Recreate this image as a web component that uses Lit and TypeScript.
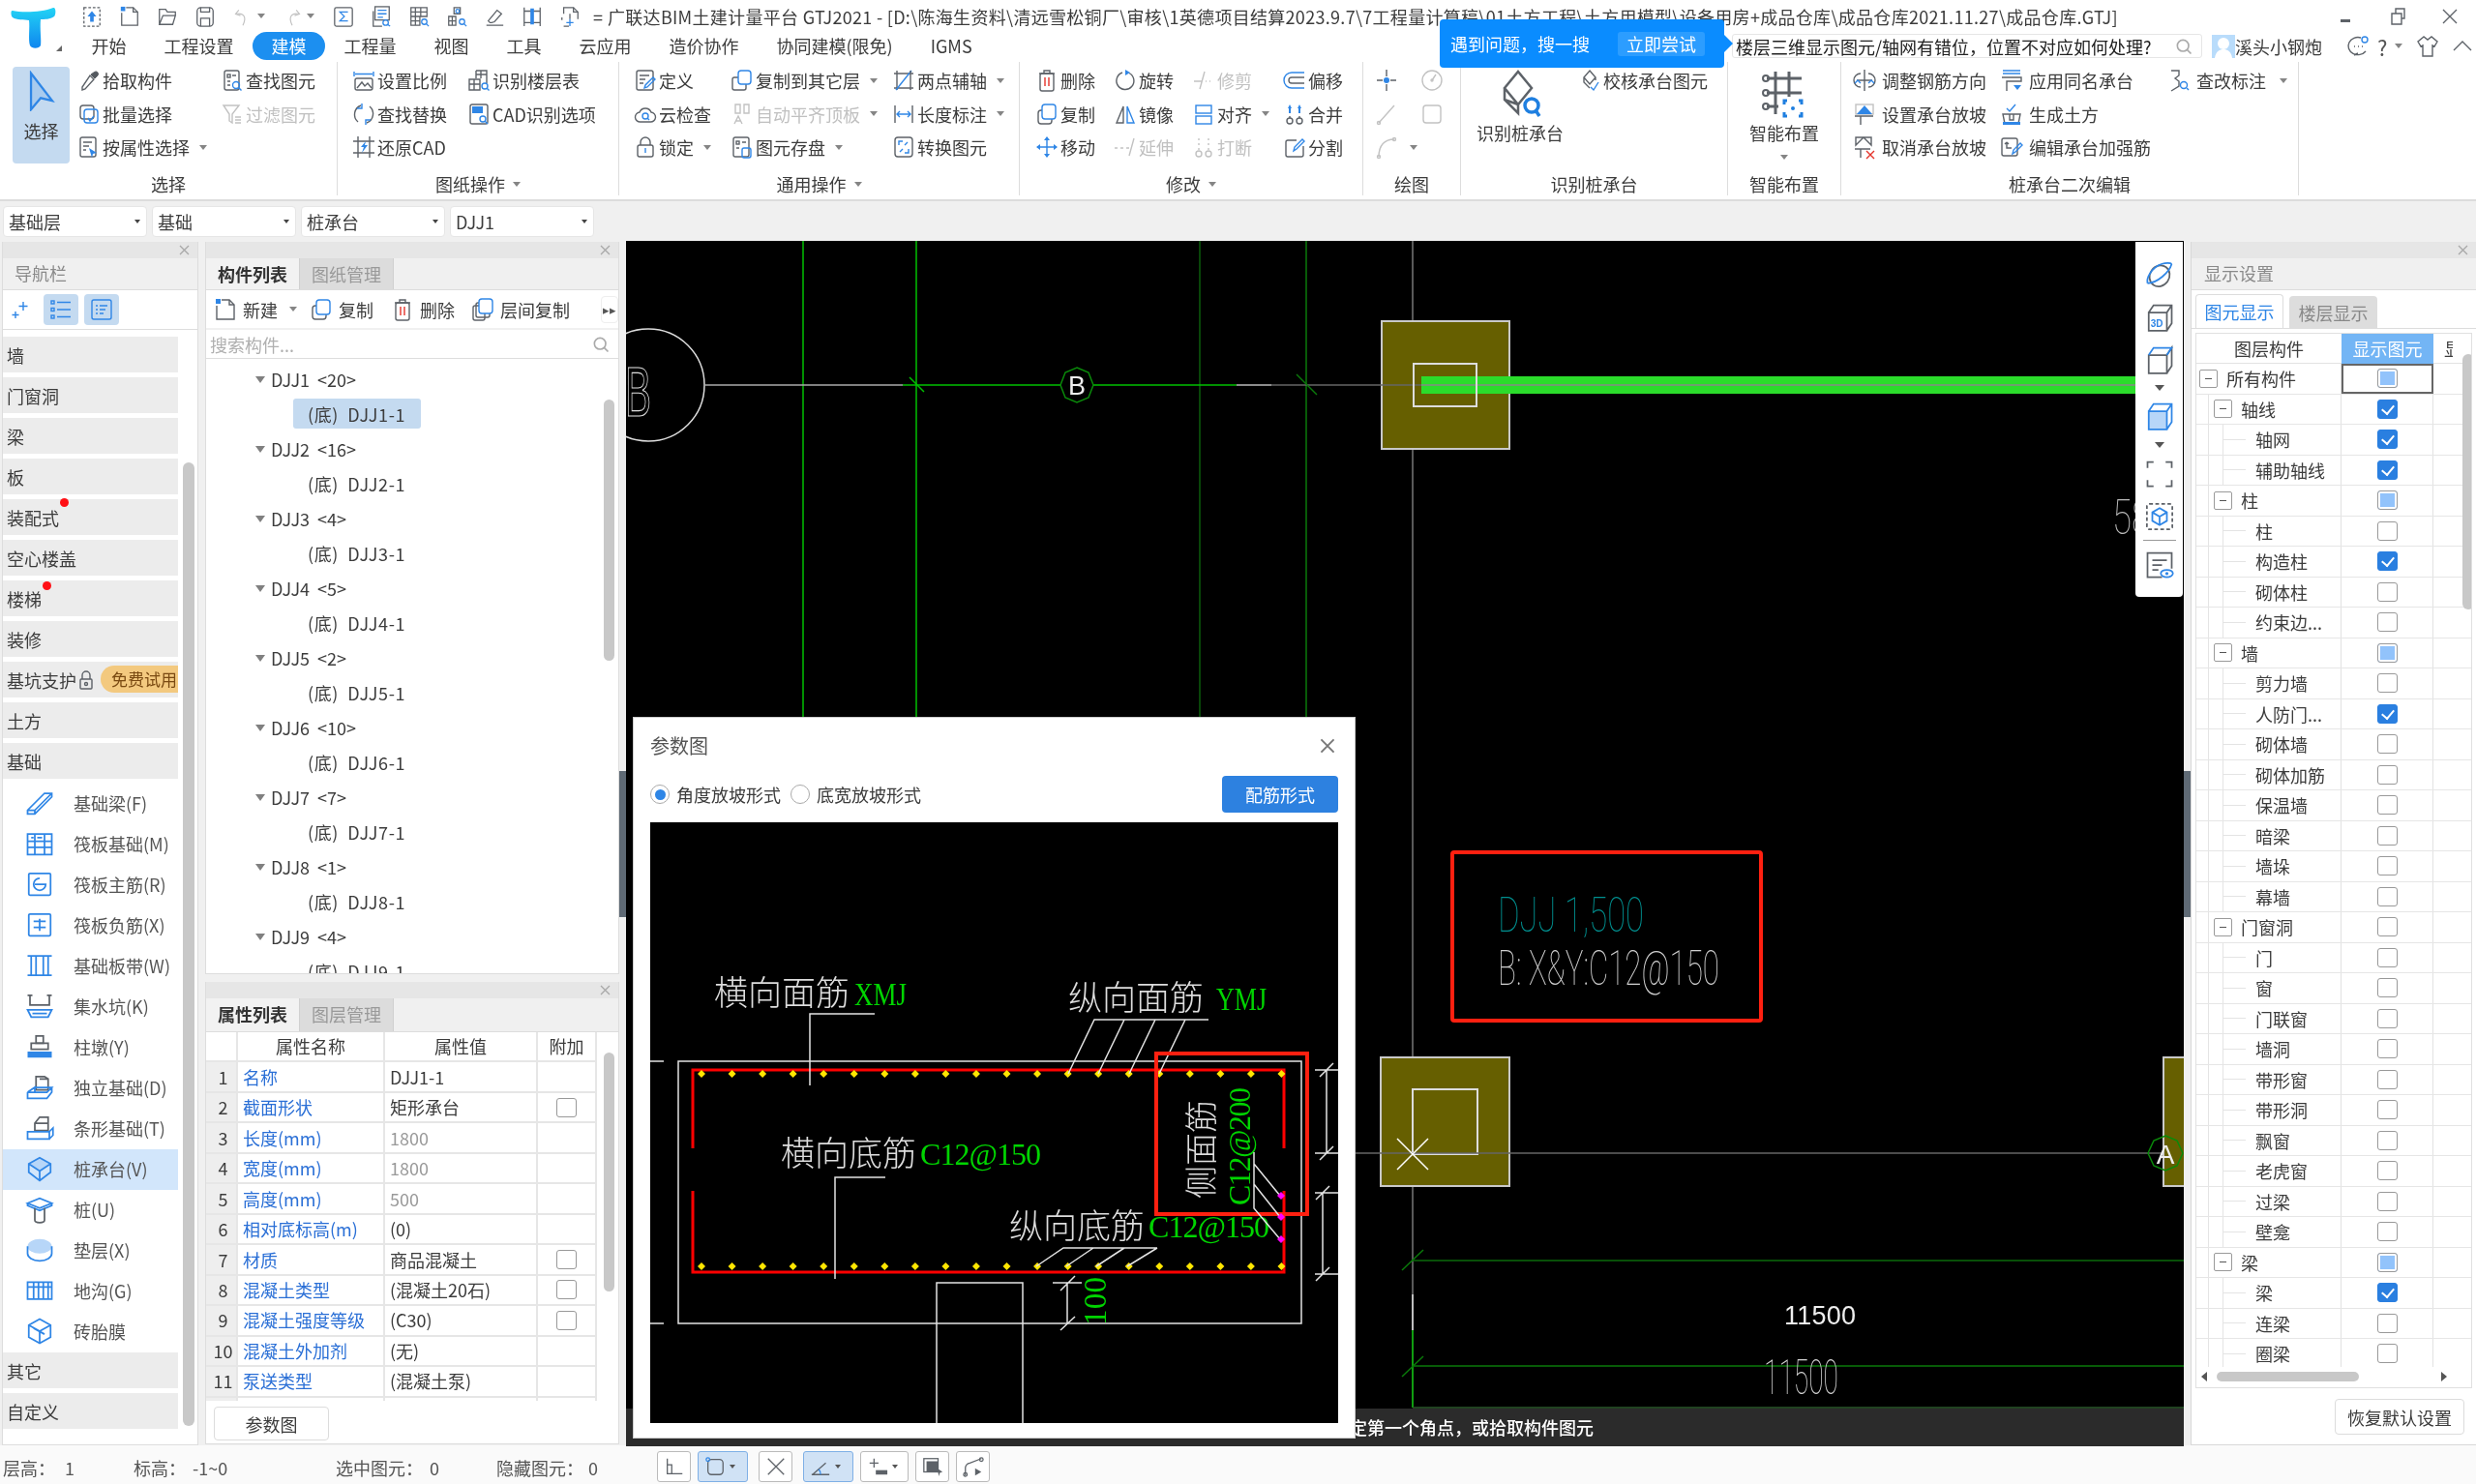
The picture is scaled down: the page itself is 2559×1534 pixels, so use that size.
import { LitElement, html, svg, css, nothing } from 'lit';
import { customElement } from 'lit/decorators.js';

// ribbon and panel icons, all on a 24 box unless the class says otherwise
const I: Record<string, any> = {
  pick: svg`<path class="dk" d="M14 6l4 4 3-3a2.5 2.5 0 0 0-3.5-3.5z"/><path class="s" d="M13 7l4 4-9 10-3 1 0-3z"/>`,
  find: svg`<rect class="s" x="4" y="2" width="15" height="20" rx="2"/><rect class="s" x="7" y="6" width="3" height="3"/><path class="s" d="M12 7h4M7 13h3M7 17h3"/><circle class="b" cx="16" cy="17" r="3.5"/><path class="b" d="M18.5 19.5l3 3"/>`,
  batch: svg`<rect class="s" x="3" y="3" width="14" height="14" rx="3"/><rect class="b" x="7" y="7" width="14" height="14" rx="3"/><path class="b" d="M11 16l2 3 4-5"/>`,
  filter: svg`<path class="d" d="M3 3h16l-7 9v9l-3-2v-7zM15 15h6M15 18h6M15 21h6"/>`,
  attr: svg`<rect class="s" x="3" y="2" width="16" height="20" rx="2"/><path class="s" d="M6 7h9M6 11h6M6 15h3"/><path class="bf" d="M12 13l8 5-4 1-1 4z"/>`,
  scale: svg`<path class="b" d="M2 3v5M22 3v5M3 5.500h18"/><rect class="s" x="3" y="10" width="18" height="12" rx="2"/><path class="s" d="M5 20l5-6 3 4 3-3 4 5"/>`,
  floor: svg`<path class="s" d="M9 2h11v13M9 2v8M14 2v8M9 6h11M2 11h11v11H2zM7 11v11M2 16h11"/><circle class="b" cx="18" cy="18" r="3"/><path class="b" d="M20 20l2.500 2.500"/>`,
  swap: svg`<path class="s" d="M9 3a10 10 0 0 0-3 17M15 21a10 10 0 0 0 3-17"/><path class="b" d="M10 1v5H5M14 23v-5h5"/>`,
  cad: svg`<rect class="s" x="3" y="2" width="18" height="20" rx="2"/><rect class="bf" x="5" y="4" width="11" height="7"/><circle class="b" cx="16" cy="17" r="3"/><path class="b" d="M18 19l3 3"/>`,
  restore: svg`<path class="s" d="M6 1v22M18 1v22M1 6h22M1 18h22"/><path class="bf" d="M14 6l-5 6h3l-2 6 6-8h-3z"/>`,
  define: svg`<rect class="s" x="3" y="2" width="17" height="20" rx="2"/><path class="s" d="M6 7h10M6 11h6M6 15h4"/><path class="b" d="M11 20l1-3 8-8 2 2-8 8z"/>`,
  cloud: svg`<path class="s" d="M7 20a5 5 0 0 1-1-10 6.500 6.500 0 0 1 12 0 5 5 0 0 1-1 10z"/><circle class="b" cx="12" cy="14" r="3"/><path class="b" d="M14 16l2 2"/>`,
  lock: svg`<path class="s" d="M7 10V7a5 5 0 0 1 10 0v3"/><rect class="s" x="4" y="10" width="16" height="12" rx="2"/><path class="b" d="M12 13v5"/>`,
  layer: svg`<rect class="s" x="2" y="9" width="14" height="13" rx="2"/><rect class="lb" x="8" y="2" width="13" height="14" rx="3"/>`,
  level: svg`<path class="d" d="M5 2h5v9H5zM14 2h5v9h-5zM4 22l4-8 4 8M6 19h4"/>`,
  store: svg`<rect class="s" x="3" y="2" width="16" height="20" rx="2"/><rect class="s" x="6" y="6" width="3" height="3"/><path class="s" d="M12 7h4M6 13h3"/><rect class="b" x="12" y="13" width="9" height="10" rx="2"/>`,
  axis: svg`<path class="s" d="M5 2v20M2 20h20M2 5h20"/><path class="b" d="M4 22L20 2"/><path class="s" d="M19 2v20"/>`,
  length: svg`<path class="s" d="M3 3v18M21 3v18"/><path class="b" d="M5 12h14M8 9l-3 3 3 3M16 9l3 3-3 3"/>`,
  convert: svg`<rect class="s" x="3" y="2" width="18" height="20" rx="3"/><path class="b" d="M7 10V6h4M17 14v4h-4M8 17l3-3M16 7l-3 3"/>`,
  del: svg`<path class="s" d="M4 5h16M9 5V2h6v3"/><rect class="s" x="5" y="5" width="14" height="18" rx="2"/><path class="r" d="M10 9v9M14 9v9"/>`,
  rotate: svg`<path class="s" d="M9 4a9 9 0 1 0 7 .5"/><path class="bf" d="M12 1l5 3-5 3z"/>`,
  trim: svg`<path class="d" d="M2 13h8M14 13h1M18 13h1M13 3l-5 18"/>`,
  offset: svg`<path class="b" d="M22 4H9a8 8 0 0 0 0 16h13"/><path class="s" d="M22 9H9a3 3 0 0 0 0 6h13"/>`,
  copy: svg`<rect class="s" x="3" y="8" width="14" height="14" rx="3"/><rect class="lb" x="7" y="2" width="14" height="15" rx="3"/>`,
  mirror: svg`<path class="s" d="M10 4L3 21h7z"/><path class="lb" d="M14 4l7 17h-7z"/>`,
  alignO: svg`<rect class="b" x="4" y="3" width="16" height="8"/><rect class="lb" x="4" y="14" width="16" height="8"/>`,
  merge: svg`<circle class="s" cx="7" cy="19" r="3"/><circle class="s" cx="17" cy="19" r="3"/><path class="s" d="M7 14v2M17 14v2"/><path class="bf" d="M7 2l2 4H8v5H6V6H5zM17 2l2 4h-1v5h-2V6h-1z"/>`,
  move: svg`<path class="b" d="M12 2v20M2 12h20"/><path class="bf" d="M12 1l3 4H9zM12 23l3-4H9zM1 12l4-3v6zM23 12l-4-3v6z"/>`,
  extend: svg`<path class="d" d="M1 13h3M7 13h3M13 13h3M21 3l-5 18"/>`,
  brk: svg`<circle class="d" cx="7" cy="19" r="3"/><circle class="d" cx="17" cy="19" r="3"/><path class="d" d="M7 3v2M7 8v2M7 13v2M17 3v2M17 8v2M17 13v2"/>`,
  split: svg`<path class="s" d="M14 5H5a2 2 0 0 0-2 2v13a2 2 0 0 0 2 2h14a2 2 0 0 0 2-2v-9"/><path class="b" d="M11 16l1-4 8-8 2 2-8 8z"/>`,
  point: svg`<path class="s" d="M12 1v7M12 16v7M2 12h6M16 12h6"/><circle class="bf" cx="12" cy="12" r="3"/>`,
  clock: svg`<circle class="d" cx="12" cy="12" r="10"/><path class="d" d="M12 12l4-6"/><circle class="d" cx="12" cy="12" r="1"/>`,
  line: svg`<path class="d" d="M4 21L20 3"/><circle class="d" cx="4" cy="21" r="1.500"/>`,
  rect: svg`<rect class="d" x="3" y="3" width="18" height="18" rx="3"/>`,
  arc: svg`<path class="d" d="M4 22C4 10 10 4 20 4"/><circle class="d" cx="4" cy="22" r="1.500"/><circle class="d" cx="20" cy="4" r="1.500"/>`,
  checkCap: svg`<path class="s" d="M12 2l6 7-6 7-6-7zM6 9v5l6 6M18 9v3"/><path class="b" d="M13 19l3 3 5-8"/>`,
  adjust: svg`<path class="s" d="M12 1v22M4 12h16M8 5a6 6 0 0 0 0 14M16 5a6 6 0 0 1 0 14"/><path class="b" d="M2 15l3-3 3 3M22 15l-3-3-3 3"/>`,
  slope: svg`<rect class="d" x="3" y="2" width="18" height="10"/><path class="bf" d="M12 3l8 9H4z"/><path class="s" d="M2 14h19M8 14v9"/>`,
  unslope: svg`<path class="s" d="M3 2h16v8l-8-8-8 8zM2 14h16M8 14v9"/><path class="r" d="M14 16l8 8M22 16l-8 8"/>`,
  apply: svg`<path class="b" d="M3 2h18M3 5h18"/><path class="s" d="M2 9h20v4H7v10"/><path class="bf" d="M14 17h8l-4 5z"/>`,
  earth: svg`<path class="b" d="M7 6l3 3 6-7"/><path class="s" d="M3 12h18l-2 10H5z"/><path class="s" d="M10 12v6h4v-6"/><path class="bf" d="M3 20h18v3H3z"/>`,
  editS: svg`<rect class="s" x="2" y="3" width="16" height="18" rx="2"/><path class="s" d="M7 7v6h5M7 7l-2 2M7 7l2 2"/><path class="b" d="M13 19l1-4 7-7 2 2-7 7z"/>`,
  modify: svg`<path class="s" d="M4 2h8v5l-4 3 4 3v5l-8 5"/><circle class="b" cx="17" cy="17" r="3.500"/><path class="b" d="M20 20l2 2"/>`,
  // quick access bar
  up: svg`<rect class="dash" x="3" y="2" width="18" height="21"/><path class="bf" d="M12 6l5 6h-3v6h-4v-6H7z"/>`,
  newDoc: svg`<path class="s" d="M8 2h8l5 5v15H3V8"/><path class="s" d="M16 2v5h5"/><rect class="bf" x="2" y="1" width="5" height="5"/>`,
  open: svg`<path class="s" d="M3 21V4h7l2 3h9v4M3 21h15l3-10H7z"/>`,
  saveQ: svg`<rect class="s" x="3" y="2" width="18" height="21" rx="4"/><path class="s" d="M7 2v5h10V2M7 23v-9h10v9"/>`,
  undo: svg`<path class="d" d="M7 4L3 9l6 2M3 9c8-2 15 2 9 14"/>`,
  redo: svg`<path class="d" d="M17 4l4 5-6 2M21 9c-8-2-15 2-9 14"/>`,
  sigma: svg`<rect class="s" x="2" y="2" width="20" height="21" rx="2"/><path class="b" d="M17 7H8l5 5-5 5h9"/>`,
  docQ: svg`<rect class="s" x="5" y="1" width="16" height="15"/><path class="b" d="M8 5h10M8 9h10M8 13h6"/><path class="s" d="M3 6v17h10"/><circle class="b" cx="17" cy="19" r="3"/><path class="b" d="M19 21l3 2"/>`,
  gridQ: svg`<path class="s" d="M3 2h18v10H13v10H3zM3 7h18M3 12h10M3 17h10M8 2v20M14 2v10"/><circle class="b" cx="18" cy="18" r="3"/><path class="b" d="M20 20l3 3"/>`,
  net: svg`<path class="s" d="M3 12h8v10H3zM7 12v10M3 17h8M9 2h7v7H9z"/><circle class="b" cx="18" cy="18" r="3"/><path class="b" d="M20 20l3 3"/><circle class="b" cx="13" cy="6" r="2"/>`,
  eraser: svg`<path class="s" d="M3 22h19M5 17l10-12 5 4-8 9-3 1H7z"/>`,
  bars: svg`<path class="s" d="M3 2v21M21 2v21M3 6h18M3 19h18"/><path class="bf" d="M10 3h4v18h-4z"/>`,
  dwg: svg`<path class="s" d="M5 9V2h11l5 5v8M5 23h6"/><path class="s" d="M16 2v5h5"/><path class="s" d="M3 13v3M12 9v6"/><path class="b" d="M12 15v8M8 19h8"/>`,
  // view toolbar
  orbit: svg`<ellipse class="s" cx="12" cy="13" rx="8" ry="9" transform="rotate(35 12 13)"/><path class="b" d="M2 19C10 19 20 10 22 3"/><path class="b" d="M2 19C1 15 5 6 14 3c3-1 7-1 8 0"/>`,
  cube3d: svg`<path class="s" d="M3 8h15v15H3zM3 8l4-6h15v15l-4 6M18 8l4-6"/><text class="t3d" x="4.500" y="20">3D</text>`,
  cube: svg`<path class="s" d="M3 8h15v15H3zM18 8l4-6v15l-4 6"/><path class="b" d="M3 8l4-6h15l-4 6"/>`,
  cubeF: svg`<path class="lbf" d="M3 8h15v15H3z"/><path class="b" d="M3 8l4-6h15v15l-4 6M18 8l4-6M3 8h15v15H3z"/>`,
  corners: svg`<path class="s" d="M2 7V2h5M17 2h5v5M2 17v5h5M22 17v5h-5"/>`,
  hexDash: svg`<rect class="dash" x="1.500" y="1.500" width="21" height="21" rx="2"/><path class="b" d="M12 5l6 3.500v7L12 19l-6-3.500v-7zM6 8.500l6 3.500 6-3.500M12 12v7"/>`,
  listEye: svg`<path class="s" d="M14 22H2V2h20v13"/><path class="s" d="M6 8h12M6 12h8M6 16h5"/><ellipse class="b" cx="18" cy="19" rx="5" ry="3"/><circle class="bf" cx="18" cy="19" r="1.300"/>`,
  // toolbar of the component panels
  spark: svg`<path class="b" d="M15 4v9M10.500 8.500h9M7 14v7M3.500 17.500h7"/>`,
  listB: svg`<rect class="b" x="2" y="3" width="3" height="3"/><rect class="b" x="2" y="10.500" width="3" height="3"/><rect class="b" x="2" y="18" width="3" height="3"/><path class="b" d="M8 4.500h14M8 12h14M8 19.500h14"/>`,
  formB: svg`<rect class="b" x="2" y="2" width="20" height="20" rx="2"/><path class="b" d="M6 8h2M10 8h8M6 12h2M10 12h6M6 16h2M10 16h4"/>`,
  layerCopy: svg`<rect class="s" x="2" y="8" width="12" height="15" rx="2"/><rect class="s" x="5" y="5" width="14" height="15" rx="2"/><rect class="lb" x="8" y="1" width="14" height="15" rx="3"/>`,
  search: svg`<circle class="g" cx="11" cy="11" r="7"/><path class="g" d="M16 16l5 5"/>`,
  // navigation tree
  nBeam: svg`<path class="b" d="M2 18l14-14h6v3L8 21H2zM2 18h6v3M8 18L22 4"/>`,
  nRaft: svg`<path class="b" d="M2 4h20v17H2zM2 10h20M2 15h20M8 4v17M16 4v17M5 7h2M10 7h4"/>`,
  nMain: svg`<rect class="b" x="3" y="3" width="18" height="18" rx="1"/><path class="b" d="M12 7a5 5 0 1 0 5 5h-9"/>`,
  nNeg: svg`<rect class="b" x="3" y="3" width="18" height="18" rx="1"/><path class="b" d="M7 9h10M7 14h10M12 7v10"/>`,
  nStrip: svg`<path class="b" d="M2 4h20M2 20h20M5 4v16M9 4v16M15 4v16M19 4v16"/>`,
  nPit: svg`<path class="s" d="M4 3v8h16V3"/><path class="s" d="M2 3h4M18 3h4"/><path class="b" d="M2 15h20l-3 6H5zM6 18h12"/>`,
  nPier: svg`<path class="s" d="M9 3h6v6H9z"/><path class="s" d="M5 9h14v5H5z"/><path class="bf" d="M2 16h20v5H2z"/>`,
  nIso: svg`<path class="s" d="M9 3h7l3 2v9H9zM9 3v11M19 5h-7"/><path class="b" d="M2 16l6-4v4M2 16h16l4-4H8M2 16v5h16l4-5v-4"/>`,
  nBand: svg`<path class="s" d="M8 8l4-5h7v11H8zM8 8h11"/><path class="b" d="M2 15h18v6H2zM20 15l3-3v6l-3 3"/>`,
  nCap: svg`<path class="lbf" d="M12 3l9 5-9 6-9-6z"/><path class="b" d="M12 3l9 5v7l-9 7-9-7V8zM3 8l9 6 9-6M12 14v8"/>`,
  nPile: svg`<path class="b" d="M2 7l10-4 10 4-10 4zM2 7v2l10 4 10-4V7"/><path class="s" d="M8 11v10a4 2 0 0 0 8 0V11"/>`,
  nPad: svg`<ellipse class="lbf" cx="12" cy="9" rx="10" ry="6"/><path class="b" d="M2 9v6c0 3 4 6 10 6s10-3 10-6V9"/>`,
  nTrench: svg`<path class="b" d="M2 5h20v14H2zM2 9h20M7 5v14M11 5v14M15 5v14M19 5v14"/>`,
  nBrick: svg`<path class="b" d="M12 2l9 5v10l-9 5-9-5V7zM3 7l9 5 9-5M12 12v10M7 9.500l9 5"/>`,
  // status toolbar
  sOrtho: svg`<path class="s" d="M4 3v17h17M4 10h5v10"/>`,
  sRect: svg`<rect class="s" x="4" y="4" width="17" height="17" rx="4"/><circle class="b" cx="4" cy="4" r="2"/>`,
  sX: svg`<path class="s" d="M3 3l18 18M21 3L3 21"/>`,
  sAng: svg`<path class="s" d="M2 21h20M3 21L18 8"/><path class="b" d="M12 21a8 8 0 0 0-2-6"/>`,
  sDyn: svg`<path class="s" d="M3 8h10M8 3v10"/><path class="dkf" d="M10 16h13v5H10z"/>`,
  sSnap: svg`<rect class="s" x="2" y="3" width="16" height="15"/><rect class="dkf" x="5" y="6" width="13" height="12"/><path class="dkf" d="M17 14l6 4-3 1-1 4z"/>`,
  sPoly: svg`<path class="s" d="M3 22V13a6 6 0 0 1 5-5l13-5"/><circle class="s" cx="3" cy="21" r="2"/><circle class="s" cx="21" cy="4" r="2"/><path class="dkf" d="M14 14l7 4-7 4z"/>`,
};

const NAV_TOP = ['墙', '门窗洞', '梁', '板', '装配式', '空心楼盖', '楼梯', '装修', '基坑支护', '土方', '基础'];
const NAV_SUB: [string, string][] = [
  ['nBeam', '基础梁(F)'], ['nRaft', '筏板基础(M)'], ['nMain', '筏板主筋(R)'], ['nNeg', '筏板负筋(X)'],
  ['nStrip', '基础板带(W)'], ['nPit', '集水坑(K)'], ['nPier', '柱墩(Y)'], ['nIso', '独立基础(D)'],
  ['nBand', '条形基础(T)'], ['nCap', '桩承台(V)'], ['nPile', '桩(U)'], ['nPad', '垫层(X)'],
  ['nTrench', '地沟(G)'], ['nBrick', '砖胎膜'],
];
const TREE: [string, number][] = [['DJJ1', 20], ['DJJ2', 16], ['DJJ3', 4], ['DJJ4', 5], ['DJJ5', 2], ['DJJ6', 10], ['DJJ7', 7], ['DJJ8', 1], ['DJJ9', 4]];
// no, name, value, has checkbox, grey value
const PROPS: [string, string, string, boolean, boolean][] = [
  ['1', '名称', 'DJJ1-1', false, false],
  ['2', '截面形状', '矩形承台', true, false],
  ['3', '长度(mm)', '1800', false, true],
  ['4', '宽度(mm)', '1800', false, true],
  ['5', '高度(mm)', '500', false, true],
  ['6', '相对底标高(m)', '(0)', false, false],
  ['7', '材质', '商品混凝土', true, false],
  ['8', '混凝土类型', '(混凝土20石)', true, false],
  ['9', '混凝土强度等级', '(C30)', true, false],
  ['10', '混凝土外加剂', '(无)', false, false],
  ['11', '泵送类型', '(混凝土泵)', false, false],
  ['12', '', '', false, false],
];
// label, tree level, p = partial, c = checked, e = empty
const LAYERS: [string, number, string][] = [
  ['所有构件', 0, 'p'], ['轴线', 1, 'c'], ['轴网', 2, 'c'], ['辅助轴线', 2, 'c'],
  ['柱', 1, 'p'], ['柱', 2, 'e'], ['构造柱', 2, 'c'], ['砌体柱', 2, 'e'], ['约束边...', 2, 'e'],
  ['墙', 1, 'p'], ['剪力墙', 2, 'e'], ['人防门...', 2, 'c'], ['砌体墙', 2, 'e'], ['砌体加筋', 2, 'e'], ['保温墙', 2, 'e'], ['暗梁', 2, 'e'], ['墙垛', 2, 'e'], ['幕墙', 2, 'e'],
  ['门窗洞', 1, 'e'], ['门', 2, 'e'], ['窗', 2, 'e'], ['门联窗', 2, 'e'], ['墙洞', 2, 'e'], ['带形窗', 2, 'e'], ['带形洞', 2, 'e'], ['飘窗', 2, 'e'], ['老虎窗', 2, 'e'], ['过梁', 2, 'e'], ['壁龛', 2, 'e'],
  ['梁', 1, 'p'], ['梁', 2, 'c'], ['连梁', 2, 'e'], ['圈梁', 2, 'e'],
];

@customElement('app-root')
export class AppRoot extends LitElement {
  static styles = css`
    :host { display: block; }
    * { box-sizing: border-box; }
    .app {
      width: 2559px; height: 1534px; display: flex; flex-direction: column; overflow: hidden; position: relative;
      background: #f0f0f0; color: #3c3c3c; font: 18px/24px "Noto Sans CJK SC", "Liberation Sans", sans-serif;
      filter: blur(0.45px);
    }
    svg.i { width: 24px; height: 24px; flex: none; display: block; overflow: visible; }
    .s, .b, .d, .g, .r, .lb, .dash, .lbf { fill: none; stroke-width: 1.4; }
    .s { stroke: #5d6268; }
    .b { stroke: #2f86e6; }
    .d { stroke: #c2c2c2; }
    .g { stroke: #aaa; stroke-width: 2; }
    .r { stroke: #e5342b; }
    .lb { stroke: #2f86e6; fill: #fff; }
    .lbf { stroke: none; fill: #b7d6f8; }
    .bf { fill: #2f86e6; stroke: none; }
    .dk { fill: #555a60; stroke: #555a60; }
    .dkf { fill: #5d6268; stroke: none; }
    .dash { stroke: #5d6268; stroke-dasharray: 3 2; }
    .t3d { fill: #2f86e6; font: 700 8px "Liberation Sans", sans-serif; }

    .caret { width: 0; height: 0; flex: none; border: 4px solid transparent; border-top: 5px solid #858585; border-bottom: 0; }
    .off { color: #c0c0c0; }

    /* title and tabs */
    .head { height: 62px; background: #fff; display: flex; flex: none; }
    .logo { width: 75px; flex: none; position: relative; }
    .logo svg { display: block; width: 60px; height: 56px; }
    .logo i { position: absolute; left: 58px; top: 47px; border: 3px solid transparent; border-right-color: #666; border-bottom-color: #666; }
    .head-r { flex: 1; min-width: 0; display: flex; flex-direction: column; }
    .title { height: 33px; display: flex; align-items: center; }
    .qa { width: 39px; display: flex; justify-content: center; flex: none; }
    .qa svg.i { height: 22px; }
    .qa.hist { width: 51px; justify-content: flex-start; padding-left: 10px; align-items: center; gap: 5px; }
    .qa.hist svg.i { width: 20px; }
    .qa.hist + .qa.hist { width: 53px; }
    .eq { width: 20px; flex: none; text-align: center; margin-left: 0; }
    .name { white-space: nowrap; flex: none; width: 1760px; overflow: hidden; letter-spacing: 0.3px; }
    .win { margin-left: auto; display: flex; flex: none; }
    .win span { width: 54px; height: 24px; display: flex; justify-content: center; align-items: center; }
    .tabs { height: 29px; display: flex; align-items: center; }
    .tab { padding: 0 19.5px; white-space: nowrap; line-height: 29px; flex: none; }
    .tab.on { background: #1c8ff0; color: #fff; border-radius: 15px; }
    .tabs-r { margin-left: auto; width: 769px; height: 24px; display: flex; align-items: center; flex: none; }
    .ask { width: 486px; height: 25px; flex: none; background: #fff; border: 1px solid #e6e6e6; border-radius: 3px; display: flex; align-items: center; padding: 0 8px 0 3px; overflow: hidden; color: #222; white-space: nowrap; justify-content: space-between; }
    .ask svg.i { width: 20px; height: 20px; }
    .avatar { width: 24px; height: 24px; margin-left: 10px; flex: none; background: #b9dcfb; display: block; }
    .uname { width: 90px; flex: none; white-space: nowrap; }
    .hic { display: flex; align-items: center; margin-left: 25px; }
    .hic svg.i { width: 24px; }
    .hic .q { font-size: 22px; margin: 0 5px 0 8px; width: 13px; color: #555; }
    .hic .shirt { margin: 0 12px 0 14px; }
    .tip {
      position: absolute; left: 1488px; top: 20px; width: 294px; height: 50px; background: #0a8cff; color: #fff; border-radius: 4px;
      display: flex; align-items: center; padding: 0 20px 0 11px; justify-content: space-between; z-index: 5;
    }
    .tip::after { content: ''; position: absolute; left: 294px; top: 16px; border: 9px solid transparent; border-left-color: #0a8cff; border-right: 0; }
    .tip span { white-space: nowrap; }
    .tip b { font-weight: 400; background: #2c9dff; border-radius: 3px; padding: 0 9px; line-height: 25px; }

    /* ribbon */
    .ribbon { height: 146px; flex: none; background: #fff; display: flex; border-bottom: 2px solid #dcdcdc; }
    .grp { margin-top: 2px; height: 138px; flex: none; border-right: 1px solid #ddd; display: flex; flex-direction: column; }
    .gbody { height: 106px; padding-top: 2px; display: flex; align-items: flex-start; }
    .gname { height: 24px; margin-top: 8px; display: flex; justify-content: center; align-items: center; gap: 8px; white-space: nowrap; }
    .cols { display: grid; grid-auto-flow: column; grid-template-rows: repeat(3, 34.5px); }
    .tool { display: flex; align-items: center; gap: 2px; white-space: nowrap; }
    .tool .caret { margin-left: 8px; }
    .g1 { width: 349px; } .g1 .gbody { padding-left: 13px; } .g1 .cols { margin-left: 8px; grid-template-columns: 148px 100px; }
    .g2 { width: 291px; } .g2 .gbody { padding-left: 15px; } .g2 .cols { grid-template-columns: 119px 130px; }
    .g3 { width: 414px; } .g3 .gbody { padding-left: 15px; } .g3 .cols { grid-template-columns: 100px 167px 110px; }
    .g4 { width: 355px; } .g4 .gbody { padding-left: 16px; } .g4 .cols { grid-template-columns: 81px 81px 94px 60px; }
    .g5 { width: 101px; } .g5 .gbody { padding-left: 12px; } .g5 .cols { grid-template-columns: 47px 40px; }
    .g6 { width: 276px; } .g6 .gbody { padding-left: 16px; }
    .g7 { width: 117px; } .g7 .gbody { justify-content: center; }
    .g8 { width: 473px; } .g8 .gbody { padding-left: 12px; } .g8 .cols { grid-template-columns: 152px 173px 120px; }
    .g8 .tool { gap: 6px; }
    .bigsel { width: 59px; height: 100px; margin-top: 3px; background: #c4daf0; border-radius: 4px; display: flex; flex-direction: column; align-items: center; }
    .bigsel svg { width: 34px; height: 42px; margin-top: 4px; margin-bottom: 8px; display: block; }
    .big { display: flex; flex-direction: column; align-items: center; width: 90px; white-space: nowrap; flex: none; }
    .big svg { width: 48px; height: 50px; margin-top: 6px; margin-bottom: 3px; display: block; }
    .big .caret { margin-top: 11px; }
    .g6 .side { margin: 5px 0 0 15px; }

    /* level selects */
    .bar { height: 40px; flex: none; display: flex; gap: 5px; padding: 5px 3px 3px; }
    .sel { width: 149px; background: #fff; border-radius: 4px; border: 1px solid #e6e6e6; display: flex; align-items: center; justify-content: space-between; padding: 0 6px 0 5px; }
    .sel .caret { border-top-color: #444; border-width: 3px; border-top-width: 4px; border-bottom-width: 0; }

    .main { height: 1246px; flex: none; display: flex; position: relative; }
    .pbar { height: 17px; flex: none; background: #e6e6e6; display: flex; justify-content: flex-end; align-items: center; padding-right: 8px; }
    .x { width: 11px; height: 11px; display: block; fill: none; stroke: #a8a8a8; stroke-width: 1.3; }
    .ptitle { height: 33px; flex: none; color: #8a8a8a; background: #f0f0f0; padding-left: 12px; line-height: 31px; border-bottom: 1px solid #ddd; }

    /* navigation */
    .nav { margin: 2px 0 0 2px; width: 203px; height: 1244px; background: #fff; border: 1px solid #ddd; border-top: 0; position: relative; flex: none; display: flex; flex-direction: column; overflow: hidden; }
    .nicons { height: 41px; flex: none; display: flex; align-items: center; border-bottom: 1px solid #ddd; }
    .nicons span { width: 36px; height: 32px; border-radius: 4px; display: flex; align-items: center; justify-content: center; margin-right: 6px; }
    .nicons .act { background: #c4daf0; }
    .nicons svg.i { width: 24px; height: 24px; }
    .nlist { padding-top: 7px; width: 181px; }
    .nitem { height: 37px; margin-bottom: 5px; background: #ececec; padding-left: 4px; line-height: 36px; display: flex; align-items: center; position: relative; white-space: nowrap; }
    .nitem.last { margin-bottom: 0; }
    .dot { position: absolute; width: 9px; height: 9px; border-radius: 50%; background: #ff0f14; top: -1px; }
    .dot.a { left: 59px; } .dot.b { left: 41px; top: 1px; }
    .lk { width: 14px; height: 20px; margin-left: 3px; }
    .free { position: absolute; left: 101px; right: 0; top: 4px; height: 28px; background: #f3c97f; color: #7a4a12; border-radius: 14px 0 0 14px; font-size: 17px; line-height: 28px; padding-left: 11px; overflow: hidden; white-space: nowrap; }
    .nsub { height: 42px; padding: 0 0 3px 23px; display: flex; align-items: center; gap: 20px; color: #555; white-space: nowrap; }
    .nsub.sel-row { background: #d2e6fb; }
    .nsub svg.i { width: 30px; height: 30px; }
    .vs { position: absolute; width: 11px; background: #c8c8c8; border-radius: 6px; }
    .vs.n { left: 186px; top: 228px; height: 996px; width: 12px; }
    .vs.t { left: 411px; top: 163px; height: 270px; }
    .vs.p { left: 411px; top: 73px; height: 247px; }
    .vs.l { left: 275px; top: 21px; height: 264px; width: 12px; }

    /* component list */
    .mid { margin: 2px 0 0 7px; width: 428px; flex: none; display: flex; flex-direction: column; gap: 8px; }
    .card { background: #fff; border: 1px solid #ddd; border-top: 0; position: relative; display: flex; flex-direction: column; overflow: hidden; }
    .card.a { height: 757px; flex: none; }
    .card.b { height: 478px; flex: none; }
    .ptabs { display: flex; background: #f0f0f0; flex: none; height: 33px; border-bottom: 1px solid #ddd; }
    .ptabs span { width: 97px; text-align: center; line-height: 33px; color: #999; background: #dcdcdc; border-right: 1px solid #d0d0d0; }
    .ptabs .on { background: #f2f2f2; color: #333; font-weight: 700; }
    .card.b .ptabs { height: 35px; }
    .ctool { height: 41px; flex: none; display: flex; align-items: center; padding-left: 8px; position: relative; border-bottom: 2px solid #f0f0f0; }
    .ctool div { display: flex; align-items: center; gap: 6px; white-space: nowrap; }
    .ctool .w1 { width: 99px; } .ctool .w2 { width: 84px; } .ctool .w3 { width: 83px; }
    .ctool .w1 .caret { margin-left: 6px; }
    .more { position: absolute; right: 0; top: 6px; width: 18px; height: 28px; border: 1px solid #eee; border-radius: 4px; justify-content: center; font-size: 13px; color: #555; }
    .csearch { height: 30px; flex: none; display: flex; align-items: center; justify-content: space-between; padding: 0 8px 0 4px; color: #b0b0b0; border-bottom: 1px solid #ddd; }
    .csearch svg.i { width: 20px; height: 20px; }
    .tree { padding-top: 3px; flex: 1; overflow: hidden; }
    .tr { height: 36px; display: flex; align-items: center; white-space: pre; }
    .tr.p { padding-left: 51px; gap: 6px; }
    .tr.p i { border: 5px solid transparent; border-top: 7px solid #808080; border-bottom: 0; width: 0; height: 0; }
    .tr.c { padding-left: 105px; position: relative; letter-spacing: 0.6px; }
    .tr.c.on::before { content: ''; position: absolute; left: 90px; width: 132px; top: 2px; height: 31px; background: #c4daf0; border-radius: 3px; }
    .tr.c span { position: relative; }

    /* properties */
    .ptable { flex: none; height: 381px; width: 404px; overflow: hidden; display: grid; grid-template-columns: 33px 152px 158px 61px; grid-auto-rows: 31.47px; align-content: start; }
    .ptable > div { border-right: 2px solid #e6e6e6; border-bottom: 2px solid #e6e6e6; line-height: 29px; padding-left: 5px; white-space: nowrap; overflow: hidden; display: flex; align-items: center; }
    .ptable .hd { text-align: center; justify-content: center; padding: 0; }
    .ptable .no { background: #eee; justify-content: center; padding: 0 0 0 4px; }
    .ptable .lbl { color: #2a6fd6; }
    .ptable .gr { color: #9a9a9a; }
    .ptable .mid-c { justify-content: center; padding: 0; }
    .pfoot { flex: 1; padding: 6px 0 0 8px; }
    .btn { background: #fff; border: 1px solid #dcdcdc; border-radius: 4px; display: flex; align-items: center; justify-content: center; }
    .pfoot .btn { width: 119px; height: 35px; }

    .strip { width: 7px; flex: none; position: relative; margin-top: 2px; }
    .strip i { position: absolute; left: 0; right: 0; top: 547px; height: 151px; background: #5f6a75; }

    /* drawing */
    .canvas { width: 1610px; height: 1246px; flex: none; background: #000; position: relative; margin-top: 1px; overflow: visible; }
    .canvas > svg.cad { position: absolute; left: 0; top: 0; width: 1610px; height: 1246px; display: block; }
    .cad text { font-family: "Liberation Sans", sans-serif; }
    .cad text.thin { font-family: Roboto, "DejaVu Sans", sans-serif; font-weight: 100; }
    .l { stroke-width: 1.500; fill: none; }
    .prompt { position: absolute; left: 0; right: 0; bottom: 0; height: 39px; background: #2b2b2b; color: #fff; font-weight: 500; line-height: 38px; padding-left: 640px; white-space: nowrap; }
    .vt { position: absolute; left: 1560px; top: 1px; width: 49px; height: 367px; background: #fff; border-radius: 0 0 4px 4px; display: flex; flex-direction: column; align-items: center; gap: 0; padding-top: 19px; }
    .vt svg.i { width: 30px; height: 30px; }
    .vt .caret { border-top-color: #555; border-width: 5px; border-top-width: 6px; margin: 11px 0; }
    .vt .caret + svg + .caret { margin: 12px 0; }
    .vt hr { width: 34px; border: 0; border-top: 1px solid #999; margin: 9px 0 10px; }
    .vt .sp { height: 14px; flex: none; }

    /* dialog */
    .dlg { position: absolute; left: 7px; top: 492px; width: 747px; height: 746px; background: #fff; border: 1px solid #ccc; padding: 0 17px; display: flex; flex-direction: column; }
    .dtitle { height: 58px; font-size: 20px; line-height: 58px; display: flex; justify-content: space-between; align-items: center; flex: none; color: #555; }
    .dtitle .x { width: 16px; height: 16px; stroke: #777; margin-right: 3px; }
    .dopts { height: 50px; flex: none; display: flex; align-items: center; padding-bottom: 8px; position: relative; }
    .radio { width: 20px; height: 20px; border-radius: 50%; border: 1.500px solid #aaa; margin-right: 7px; flex: none; display: flex; align-items: center; justify-content: center; }
    .radio.on i { width: 11px; height: 11px; border-radius: 50%; background: #2f86e6; display: block; }
    .dopts .lab { width: 118px; white-space: nowrap; }
    .dopts .go { position: absolute; right: 0; top: 2px; width: 120px; height: 38px; background: #2d81e0; color: #fff; border-radius: 4px; text-align: center; line-height: 38px; }
    .dimg { width: 711px; height: 621px; display: block; background: #000; flex: none; }
    .dimg text { font-family: "Noto Sans CJK SC", sans-serif; fill: #ddd; font-weight: 300; }
    .dimg .gt { font-family: "Liberation Serif", serif; fill: #00d400; font-weight: 400; }
    .w { stroke: #e4e4e4; stroke-width: 1.500; fill: none; }

    /* display settings */
    .right { width: 296px; flex: none; margin-top: 2px; height: 1244px; background: #fff; border: 1px solid #d8d8d8; border-top: 0; display: flex; flex-direction: column; position: relative; overflow: hidden; }
    .right .ptitle { padding-left: 13px; }
    .rtabs { height: 40px; flex: none; display: flex; align-items: flex-end; padding-left: 4px; gap: 6px; border-bottom: 1px solid #ddd; }
    .rtabs span { width: 91px; height: 35px; text-align: center; line-height: 34px; border-radius: 4px 4px 0 0; }
    .rtabs .on { color: #2f86e6; border: 1px solid #ddd; border-bottom: 0; background: #fff; }
    .rtabs .no2 { color: #888; background: #ddd; height: 33px; }
    .rbox { margin: 4px 4px 0 4px; height: 1091px; border: 1px solid #e0e0e0; position: relative; overflow: hidden; flex: none; }
    .rhead { height: 31px; display: grid; grid-template-columns: 150px 95px 20px; text-align: center; line-height: 31px; border-bottom: 1px solid #e2e2e2; }
    .rhead .h2 { background: #73b5f5; color: #fff; }
    .rhead .h3 { overflow: hidden; padding-left: 11px; text-align: left; white-space: nowrap; }
    .rrows { height: 1037px; overflow: hidden; }
    .rr { height: 31.5px; display: grid; grid-template-columns: 150px 95px 20px; border-bottom: 1px solid #e6e6e6; }
    .nm { display: flex; align-items: center; border-right: 1px solid #e2e2e2; white-space: nowrap; }
    .nm.lv0 { padding-left: 3px; }
    .nm.lv1 { padding-left: 18px; background: linear-gradient(#e4e4e4, #e4e4e4) 12px 0 / 1px 100% no-repeat; }
    .nm.lv2 {
      padding-left: 61px;
      background:
        linear-gradient(#e4e4e4, #e4e4e4) 12px 0 / 1px 100% no-repeat,
        linear-gradient(#e4e4e4, #e4e4e4) 27px 0 / 1px 100% no-repeat,
        linear-gradient(#e4e4e4, #e4e4e4) 27px 50% / 24px 1px no-repeat;
    }
    .exp { width: 19px; height: 19px; border: 1px solid #9a9a9a; border-radius: 2px; background: #fff; margin-right: 9px; display: flex; align-items: center; justify-content: center; flex: none; }
    .exp::before { content: ''; width: 7px; height: 1px; background: #555; }
    .ck { border-right: 1px solid #e2e2e2; display: flex; align-items: center; justify-content: center; }
    .ck.cur { outline: 2px solid #666; outline-offset: -2px; }
    .box { width: 21px; height: 20px; border: 1px solid #999; border-radius: 3px; background: #fff; display: block; flex: none; }
    .box.p { border-color: #9a9a9a; box-shadow: inset 0 0 0 2px #fff; background: #92c3fb; }
    .box.c { background: #2a7fe0; border-color: #2a7fe0; position: relative; }
    .box.c::after { content: ''; position: absolute; left: 6px; top: 2px; width: 6px; height: 10px; border: solid #fff; border-width: 0 2.500px 2.500px 0; transform: rotate(40deg); }
    .hs { height: 22px; position: relative; }
    .hs u { position: absolute; left: 21px; top: 5px; width: 147px; height: 10px; border-radius: 5px; background: #c8c8c8; }
    .hs i { position: absolute; top: 5px; width: 0; height: 0; border: 5px solid transparent; }
    .hs .al { left: 5px; border-right: 6px solid #555; border-left: 0; }
    .hs .ar { left: 253px; border-left: 6px solid #555; border-right: 0; }
    .rfoot { flex: 1; display: flex; justify-content: flex-end; padding: 11px 12px 0 0; }
    .rfoot .btn { width: 134px; height: 37px; white-space: nowrap; }

    /* status */
    .status { height: 40px; flex: none; background: #fafafa; display: flex; padding-top: 6px; align-items: flex-start; }
    .st { line-height: 34px; white-space: nowrap; display: flex; color: #555; flex: none; }
    .st b { font-weight: 400; }
    .st1 { width: 135px; margin-left: 3px; } .st1 b { margin-left: 10px; }
    .st2 { width: 209px; } .st2 b { margin-left: 7px; }
    .st3 { width: 166px; } .st3 b { margin-left: 7px; }
    .st4 { width: 166px; } .st4 b { margin-left: 5px; }
    .sbtns { display: flex; gap: 7px; }
    .sb { height: 32px; background: #fff; border: 1px solid #bbb; border-radius: 3px; display: flex; align-items: center; padding-left: 6px; gap: 4px; width: 35px; }
    .sb.w { width: 52px; }
    .sb.w2 { width: 50px; }
    .sb.gapl { margin-left: 4px; }
    .sb.on { background: #d0e2f5; border-color: #7fb0e6; }
    .sb svg.i { width: 22px; height: 22px; }
    .sb .caret { border-width: 3px; border-top-width: 4px; border-bottom-width: 0; border-top-color: #555; }
  `;

  private ic(name: string) {
    return html`<svg class="i" viewBox="0 0 24 24">${I[name]}</svg>`;
  }

  private close() {
    return html`<svg class="x" viewBox="0 0 11 11"><path d="M1 1l9 9M10 1l-9 9"/></svg>`;
  }

  private tool(icon: string, label: string, opts: { caret?: boolean; off?: boolean } = {}) {
    return html`<div class="tool ${opts.off ? 'off' : ''}">${this.ic(icon)}<span>${label}</span>${opts.caret ? html`<i class="caret"></i>` : nothing}</div>`;
  }

  private renderHead() {
    return html`
      <div class="head">
        <div class="logo">
          <svg viewBox="0 0 60 56">
            <defs><linearGradient id="tg" x1="0" y1="0" x2="0" y2="1"><stop offset="0" stop-color="#22d3f5"/><stop offset="1" stop-color="#0f86ef"/></linearGradient></defs>
            <path fill="url(#tg)" d="M13 11c9 2 30 2 42-3 3-1 3 7 1 9-4 3-10 3-14 3-1 10 1 22 0 27-1 3-9 4-11 0-2-6 0-19-1-26-5-1-13 0-17-3-2-2-2-8 0-7z"/>
          </svg>
          <i></i>
        </div>
        <div class="head-r">
          <div class="title">
            <span class="qa">${this.ic('up')}</span>
            <span class="qa">${this.ic('newDoc')}</span>
            <span class="qa">${this.ic('open')}</span>
            <span class="qa">${this.ic('saveQ')}</span>
            <span class="qa hist">${this.ic('undo')}<i class="caret"></i></span>
            <span class="qa hist">${this.ic('redo')}<i class="caret"></i></span>
            <span class="qa">${this.ic('sigma')}</span>
            <span class="qa">${this.ic('docQ')}</span>
            <span class="qa">${this.ic('gridQ')}</span>
            <span class="qa">${this.ic('net')}</span>
            <span class="qa">${this.ic('eraser')}</span>
            <span class="qa">${this.ic('bars')}</span>
            <span class="qa">${this.ic('dwg')}</span>
            <span class="eq">=</span>
            <span class="name">广联达BIM土建计量平台 GTJ2021 - [D:\\陈海生资料\\清远雪松铜厂\\审核\\1英德项目结算2023.9.7\\7工程量计算稿\\01土方工程\\土方用模型\\设备用房+成品仓库\\成品仓库2021.11.27\\成品仓库.GTJ]</span>
            <div class="win">
              <span><svg class="i" viewBox="0 0 24 24"><path class="dkf" d="M7 15h10v3H7z"/></svg></span>
              <span><svg class="i" viewBox="0 0 24 24"><path class="s" d="M6 9h10v11H6zM10 9V4h9v10h-3"/></svg></span>
              <span><svg class="i" viewBox="0 0 24 24"><path class="s" d="M5 5l14 14M19 5L5 19"/></svg></span>
            </div>
          </div>
          <div class="tabs">
            ${['开始', '工程设置', '建模', '工程量', '视图', '工具', '云应用', '造价协作', '协同建模(限免)', 'IGMS'].map(t => html`<span class="tab ${t === '建模' ? 'on' : ''}">${t}</span>`)}
            <div class="tabs-r">
              <div class="ask"><span>楼层三维显示图元/轴网有错位，位置不对应如何处理?</span>${this.ic('search')}</div>
              <svg class="avatar" viewBox="0 0 24 24"><circle cx="12" cy="9" r="6" fill="#fff"/><path fill="#fff" d="M3 24c1-7 5-9 9-9s8 2 9 9z"/></svg>
              <span class="uname">溪头小钢炮</span>
              <div class="hic">
                <svg class="i" viewBox="0 0 24 24"><path class="s" d="M15 3a10 9 0 1 0 5 14M8 21l4-2"/><path class="s" d="M8 12h1M12 12h1M16 12h1"/><circle class="b" cx="19" cy="5" r="3"/></svg>
                <span class="q">?</span><i class="caret"></i>
                <svg class="i shirt" viewBox="0 0 24 24"><path class="s" d="M8 2L2 7l3 5 2-1v11h10V11l2 1 3-5-6-5-4 3z"/></svg>
                <svg class="i" viewBox="0 0 24 24"><path class="s" d="M3 16l9-9 9 9"/></svg>
              </div>
            </div>
          </div>
        </div>
      </div>
      <div class="tip"><span>遇到问题，搜一搜</span><b>立即尝试</b></div>
    `;
  }

  private renderRibbon() {
    return html`
      <div class="ribbon">
        <div class="grp g1">
          <div class="gbody">
            <div class="bigsel">
              <svg viewBox="0 0 34 46"><path fill="#a9cbee" stroke="#2f86e6" stroke-width="2.500" d="M5 3l24 31-13-3-11 13z"/></svg>
              <span>选择</span>
            </div>
            <div class="cols">
              ${this.tool('pick', '拾取构件')}${this.tool('batch', '批量选择')}${this.tool('attr', '按属性选择', { caret: true })}
              ${this.tool('find', '查找图元')}${this.tool('filter', '过滤图元', { off: true })}<span></span>
            </div>
          </div>
          <div class="gname">选择</div>
        </div>
        <div class="grp g2">
          <div class="gbody"><div class="cols">
            ${this.tool('scale', '设置比例')}${this.tool('swap', '查找替换')}${this.tool('restore', '还原CAD')}
            ${this.tool('floor', '识别楼层表')}${this.tool('cad', 'CAD识别选项')}<span></span>
          </div></div>
          <div class="gname">图纸操作<i class="caret"></i></div>
        </div>
        <div class="grp g3">
          <div class="gbody"><div class="cols">
            ${this.tool('define', '定义')}${this.tool('cloud', '云检查')}${this.tool('lock', '锁定', { caret: true })}
            ${this.tool('layer', '复制到其它层', { caret: true })}${this.tool('level', '自动平齐顶板', { caret: true, off: true })}${this.tool('store', '图元存盘', { caret: true })}
            ${this.tool('axis', '两点辅轴', { caret: true })}${this.tool('length', '长度标注', { caret: true })}${this.tool('convert', '转换图元')}
          </div></div>
          <div class="gname">通用操作<i class="caret"></i></div>
        </div>
        <div class="grp g4">
          <div class="gbody"><div class="cols">
            ${this.tool('del', '删除')}${this.tool('copy', '复制')}${this.tool('move', '移动')}
            ${this.tool('rotate', '旋转')}${this.tool('mirror', '镜像')}${this.tool('extend', '延伸', { off: true })}
            ${this.tool('trim', '修剪', { off: true })}${this.tool('alignO', '对齐', { caret: true })}${this.tool('brk', '打断', { off: true })}
            ${this.tool('offset', '偏移')}${this.tool('merge', '合并')}${this.tool('split', '分割')}
          </div></div>
          <div class="gname">修改<i class="caret"></i></div>
        </div>
        <div class="grp g5">
          <div class="gbody"><div class="cols">
            ${this.tool('point', '')}${this.tool('line', '')}${this.tool('arc', '', { caret: true })}
            ${this.tool('clock', '')}${this.tool('rect', '')}<span></span>
          </div></div>
          <div class="gname">绘图</div>
        </div>
        <div class="grp g6">
          <div class="gbody">
            <div class="big">
              <svg viewBox="0 0 48 50"><path fill="none" stroke="#5d6268" stroke-width="2.500" d="M22 2l14 17-14 17L8 19zM8 19v12l14 14V36M22 36l-14-5"/><circle cx="36" cy="37" r="7" fill="none" stroke="#1f7fe0" stroke-width="3.500"/><path stroke="#1f7fe0" stroke-width="3.500" d="M40 42l4 6"/></svg>
              <span>识别桩承台</span>
            </div>
            <div class="side">${this.tool('checkCap', '校核承台图元')}</div>
          </div>
          <div class="gname">识别桩承台</div>
        </div>
        <div class="grp g7">
          <div class="gbody">
            <div class="big">
              <svg viewBox="0 0 48 50"><path fill="none" stroke="#5d6268" stroke-width="3" d="M15 2v44M29 2v26M6 9h36M6 24h36M6 38h12"/><circle cx="5" cy="9" r="3" fill="none" stroke="#5d6268" stroke-width="2"/><circle cx="5" cy="24" r="3" fill="none" stroke="#5d6268" stroke-width="2"/><circle cx="5" cy="38" r="3" fill="none" stroke="#5d6268" stroke-width="2"/><path fill="none" stroke="#1f7fe0" stroke-width="3" d="M27 32h-3v4M39 32h3v4M27 48h-3v-4M39 48h3v-4"/><circle cx="33" cy="40" r="2" fill="#1f7fe0"/></svg>
              <span>智能布置</span>
              <i class="caret"></i>
            </div>
          </div>
          <div class="gname">智能布置</div>
        </div>
        <div class="grp g8">
          <div class="gbody"><div class="cols">
            ${this.tool('adjust', '调整钢筋方向')}${this.tool('slope', '设置承台放坡')}${this.tool('unslope', '取消承台放坡')}
            ${this.tool('apply', '应用同名承台')}${this.tool('earth', '生成土方')}${this.tool('editS', '编辑承台加强筋')}
            ${this.tool('modify', '查改标注', { caret: true })}<span></span><span></span>
          </div></div>
          <div class="gname">桩承台二次编辑</div>
        </div>
      </div>
      <div class="bar">
        ${['基础层', '基础', '桩承台', 'DJJ1'].map(s => html`<div class="sel"><span>${s}</span><i class="caret"></i></div>`)}
      </div>
    `;
  }

  private renderNav() {
    return html`
      <div class="nav">
        <div class="pbar">${this.close()}</div>
        <div class="ptitle">导航栏</div>
        <div class="nicons">
          <span class="pl">${this.ic('spark')}</span>
          <span class="act">${this.ic('listB')}</span>
          <span class="act">${this.ic('formB')}</span>
        </div>
        <div class="nlist">
          ${NAV_TOP.map(n => html`
            <div class="nitem">
              ${n}
              ${n === '装配式' ? html`<i class="dot a"></i>` : nothing}
              ${n === '楼梯' ? html`<i class="dot b"></i>` : nothing}
              ${n === '基坑支护' ? html`<svg class="lk" viewBox="0 0 14 20"><path class="s" d="M3 9V5a4 4 0 0 1 8 0v4"/><rect class="s" x="1" y="9" width="12" height="10" rx="1"/><circle class="s" cx="7" cy="14" r="1.500"/></svg><span class="free">免费试用</span>` : nothing}
            </div>`)}
          ${NAV_SUB.map(([icon, label]) => html`
            <div class="nsub ${label.startsWith('桩承台') ? 'sel-row' : ''}">
              <svg class="i" viewBox="0 0 24 24">${I[icon]}</svg><span>${label}</span>
            </div>`)}
          <div class="nitem">其它</div>
          <div class="nitem last">自定义</div>
        </div>
        <i class="vs n"></i>
      </div>
    `;
  }

  private renderMid() {
    return html`
      <div class="mid">
        <div class="card a">
          <div class="pbar">${this.close()}</div>
          <div class="ptabs"><span class="on">构件列表</span><span>图纸管理</span></div>
          <div class="ctool">
            <div class="w1">${this.ic('newDoc')}<span>新建</span><i class="caret"></i></div>
            <div class="w2">${this.ic('copy')}<span>复制</span></div>
            <div class="w3">${this.ic('del')}<span>删除</span></div>
            <div>${this.ic('layerCopy')}<span>层间复制</span></div>
            <div class="more">▸▸</div>
          </div>
          <div class="csearch"><span>搜索构件...</span>${this.ic('search')}</div>
          <div class="tree">
            ${TREE.map(([name, n], idx) => html`
              <div class="tr p"><i></i><span>${name}  &lt;${n}&gt;</span></div>
              <div class="tr c ${idx === 0 ? 'on' : ''}"><span>(底)  ${name}-1</span></div>`)}
          </div>
          <i class="vs t"></i>
        </div>
        <div class="card b">
          <div class="pbar">${this.close()}</div>
          <div class="ptabs"><span class="on">属性列表</span><span>图层管理</span></div>
          <div class="ptable">
            <div class="hd"></div><div class="hd">属性名称</div><div class="hd">属性值</div><div class="hd">附加</div>
            ${PROPS.map(([no, name, val, box, grey]) => html`
              <div class="no">${no}</div>
              <div class="lbl">${name}</div>
              <div class="${grey ? 'gr' : ''}">${val}</div>
              <div class="mid-c">${box ? html`<i class="box"></i>` : nothing}</div>`)}
          </div>
          <div class="pfoot"><div class="btn">参数图</div></div>
          <i class="vs p"></i>
        </div>
      </div>
    `;
  }

  private tick(x1: number, y1: number, x2: number, y2: number, c: string) {
    return svg`<path class="l" stroke="${c}" d="M${x1} ${y1}L${x2} ${y2}"/>`;
  }

  // the free drawing, in page coordinates
  private renderCad() {
    const pile = (x: number, y: number, w: number, h: number) =>
      svg`<rect x="${x}" y="${y}" width="${w}" height="${h}" fill="#665f00" stroke="#c9c9c9" stroke-width="2"/>`;
    return svg`
      <svg class="cad" viewBox="647 249 1610 1246">
        ${[[830, '#00c000'], [947, '#00c000'], [1240, '#0b5c0b'], [1350, '#0a7a0a'], [1460, '#777']].map(([x, c]) => svg`<path class="l" stroke="${c}" d="M${x} 249V1338"/>`)}
        <path class="l" stroke="#fff" stroke-width="2" d="M1460 1338V1375"/>
        <path class="l" stroke="#16d016" stroke-width="2" d="M1460 1375V1455"/>
        <circle cx="670" cy="398" r="58" fill="none" stroke="#ddd" stroke-width="1.500"/>
        <text x="646" y="430" font-size="72" fill="none" stroke="#ddd" stroke-width="1.200" textLength="27" lengthAdjust="spacingAndGlyphs">B</text>
        ${pile(1428, 332, 132, 132)}
        <path class="l" stroke="#aaa" stroke-width="2" d="M728 398H933"/>
        <path class="l" stroke="#00c000" stroke-width="2" d="M933 398H1278"/>
        <path class="l" stroke="#bbb" stroke-width="2.500" d="M1278 398H1314"/>
        <path class="l" stroke="#666" stroke-width="2" d="M1314 398H2208"/>
        ${this.tick(940, 390, 955, 405, '#00c000')}
        ${this.tick(1340, 387, 1361, 408, '#0a7a0a')}
        <path fill="#000" stroke="#0a8a0a" stroke-width="1.500" d="M1113 380l12 5 5 13-5 13-12 5-12-5-5-13 5-13z"/>
        <text x="1113" y="408" text-anchor="middle" font-size="27" fill="#eee">B</text>
        <path fill="#2bdc2b" d="M1469 389H2208V407H1469z"/>
        <path class="l" stroke="#888" stroke-width="2" d="M1469 398H2208"/>
        <rect x="1461" y="376" width="65" height="44" fill="none" stroke="#ddd" stroke-width="2"/>
        <text class="thin" x="2183" y="552" font-size="50" fill="#bbb" textLength="40" lengthAdjust="spacingAndGlyphs">58</text>

        <rect x="1501" y="881" width="319" height="174" rx="2" fill="none" stroke="#ff2010" stroke-width="4"/>
        <text class="thin" x="1548" y="963" font-size="50" fill="#009090" textLength="151" lengthAdjust="spacingAndGlyphs">DJJ 1,500</text>
        <text class="thin" x="1548" y="1018" font-size="50" fill="#d0d0d0" textLength="229" lengthAdjust="spacingAndGlyphs">B: X&amp;Y:C12@150</text>

        ${pile(1427, 1093, 133, 133)}
        <rect x="1460" y="1126" width="67" height="67" fill="none" stroke="#ddd" stroke-width="2"/>
        <path class="l" stroke="#666" stroke-width="2" d="M1400 1192H2257"/>
        <path class="l" stroke="#fff" stroke-width="3" d="M1444 1177l32 32M1476 1177l-32 32"/>
        ${pile(2236, 1093, 30, 133)}
        <path fill="none" stroke="#0a8a0a" stroke-width="1.500" d="M2238 1174l12 5 6 13-6 13-12 5-12-5-6-13 6-13z"/>
        <text x="2238" y="1203" text-anchor="middle" font-size="28" fill="#eee">A</text>

        <path class="l" stroke="#0b6a0b" stroke-width="2" d="M1460 1303H2257"/>
        <path class="l" stroke="#0a7a0a" d="M1460 1412H2257"/>
        <path class="l" stroke="#2d5a2d" stroke-width="2" d="M1460 1455H2257"/>
        ${this.tick(1449, 1313, 1471, 1292, '#0a7a0a')}
        ${this.tick(1449, 1423, 1471, 1402, '#0a7a0a')}
        <text x="1844" y="1369" font-size="27" fill="#eee" textLength="74">11500</text>
        <text class="thin" x="1823" y="1441" font-size="50" fill="#d4d4d4" textLength="77" lengthAdjust="spacingAndGlyphs">11500</text>
      </svg>
    `;
  }

  private renderDialog() {
    const tops = Array.from({ length: 20 }, (_, i) => 724 + i * 31.55);
    const dia = (x: number, y: number, c: string) => svg`<path fill="${c}" d="M${x} ${y - 4}l4 4-4 4-4-4z"/>`;
    return html`
      <div class="dlg">
        <div class="dtitle"><span>参数图</span>${this.close()}</div>
        <div class="dopts">
          <i class="radio on"><i></i></i><span class="lab">角度放坡形式</span>
          <i class="radio"></i><span class="lab">底宽放坡形式</span>
          <div class="go">配筋形式</div>
        </div>
        <svg class="dimg" viewBox="671 849 711 621">
          <path class="w" d="M700 1096H1344V1367H700z"/>
          <path class="w" d="M671 1096H685M671 1367H685"/>
          <path fill="none" stroke="#f00" stroke-width="3" d="M715 1186V1105H1326V1186M715 1230V1314H1326V1230"/>
          ${tops.map(x => svg`${dia(x, 1109, '#ffe600')}${dia(x, 1308, '#ffe600')}`)}
          <text x="737" y="1038" font-size="35">横向面筋</text>
          <text class="gt" x="882" y="1038" font-size="34" textLength="54" lengthAdjust="spacingAndGlyphs">XMJ</text>
          <path class="w" d="M903 1047H836V1121"/>
          <text x="1103" y="1043" font-size="35">纵向面筋</text>
          <text class="gt" x="1256" y="1043" font-size="34" textLength="52" lengthAdjust="spacingAndGlyphs">YMJ</text>
          <path class="w" d="M1248 1053H1130L1103 1109M1161 1053L1134 1109M1193 1053L1166 1109M1224 1053L1197 1109"/>
          <text x="806" y="1204" font-size="35">横向底筋</text>
          <text class="gt" x="950" y="1203" font-size="32" textLength="125">C12@150</text>
          <path class="w" d="M914 1216H862V1321"/>
          <text x="1042" y="1279" font-size="35">纵向底筋</text>
          <text class="gt" x="1186" y="1278" font-size="32" textLength="125">C12@150</text>
          <path class="w" d="M1195 1289H1098L1070 1308M1129 1289L1101 1308M1161 1289L1132 1308M1195 1289L1164 1308"/>
          <path class="w" d="M967 1470V1325H1056V1470"/>
          <text class="gt" x="0" y="0" font-size="33" textLength="50" transform="translate(1142 1369) rotate(-90)">100</text>
          <path class="w" d="M1087 1325H1117M1102 1325V1367M1095 1333L1110 1318M1095 1374L1110 1360"/>
          <path class="w" d="M1358 1105H1382M1370 1105V1191M1358 1191H1382M1363 1112L1377 1098M1363 1198L1377 1184"/>
          <path class="w" d="M1358 1232H1382M1366 1232V1316M1358 1316H1382M1359 1239L1373 1225M1359 1323L1373 1309"/>
          <path fill="none" stroke="#ff2010" stroke-width="4" d="M1194 1088H1350V1254H1194z"/>
          <text font-size="34" transform="translate(1253 1238) rotate(-90)">侧面筋</text>
          <text class="gt" font-size="32" textLength="122" transform="translate(1291 1245) rotate(-90)">C12@200</text>
          <path class="w" d="M1295 1190V1248L1322 1280M1295 1202L1322 1235M1295 1223L1322 1257"/>
          ${[1235, 1257, 1280].map(y => dia(1323, y, '#ff00ff'))}
        </svg>
      </div>
    `;
  }

  private renderRight() {
    return html`
      <div class="right">
        <div class="pbar">${this.close()}</div>
        <div class="ptitle">显示设置</div>
        <div class="rtabs"><span class="on">图元显示</span><span class="no2">楼层显示</span></div>
        <div class="rbox">
          <div class="rhead"><span>图层构件</span><span class="h2">显示图元</span><span class="h3">显示</span></div>
          <div class="rrows">
            ${LAYERS.map(([label, lv, st], idx) => html`
              <div class="rr">
                <div class="nm lv${lv}">${lv < 2 ? html`<i class="exp"></i>` : nothing}<span>${label}</span></div>
                <div class="ck ${idx === 0 ? 'cur' : ''}"><i class="box ${st}"></i></div>
                <div></div>
              </div>`)}
          </div>
          <div class="hs"><i class="al"></i><u></u><i class="ar"></i></div>
          <i class="vs l"></i>
        </div>
        <div class="rfoot"><div class="btn">恢复默认设置</div></div>
      </div>
    `;
  }

  private renderStatus() {
    const sb = (icon: string, cls = '') => html`<div class="sb ${cls}">${this.ic(icon)}${/w/.test(cls) ? html`<i class="caret"></i>` : nothing}</div>`;
    return html`
      <div class="status">
        <div class="st st1">层高：<b>1</b></div>
        <div class="st st2">标高：<b>-1~0</b></div>
        <div class="st st3">选中图元：<b>0</b></div>
        <div class="st st4">隐藏图元：<b>0</b></div>
        <div class="sbtns">
          ${sb('sOrtho')}${sb('sRect', 'w on')}${sb('sX', 'gapl')}${sb('sAng', 'w on gapl')}${sb('sDyn', 'w2')}${sb('sSnap')}${sb('sPoly')}
        </div>
      </div>
    `;
  }

  render() {
    return html`
      <div class="app">
        ${this.renderHead()}
        ${this.renderRibbon()}
        <div class="main">
          ${this.renderNav()}
          ${this.renderMid()}
          <div class="strip"><i></i></div>
          <div class="canvas">
            ${this.renderCad()}
            <div class="prompt">按鼠标左键指定第一个角点，或拾取构件图元</div>
            <div class="vt">
              ${this.ic('orbit')}<span class="sp"></span>
              ${this.ic('cube3d')}<span class="sp"></span>
              ${this.ic('cube')}<i class="caret"></i>
              ${this.ic('cubeF')}<i class="caret"></i>
              ${this.ic('corners')}<span class="sp"></span>
              ${this.ic('hexDash')}<hr>
              ${this.ic('listEye')}
            </div>
            ${this.renderDialog()}
          </div>
          <div class="strip"><i></i></div>
          ${this.renderRight()}
        </div>
        ${this.renderStatus()}
      </div>
    `;
  }
}
